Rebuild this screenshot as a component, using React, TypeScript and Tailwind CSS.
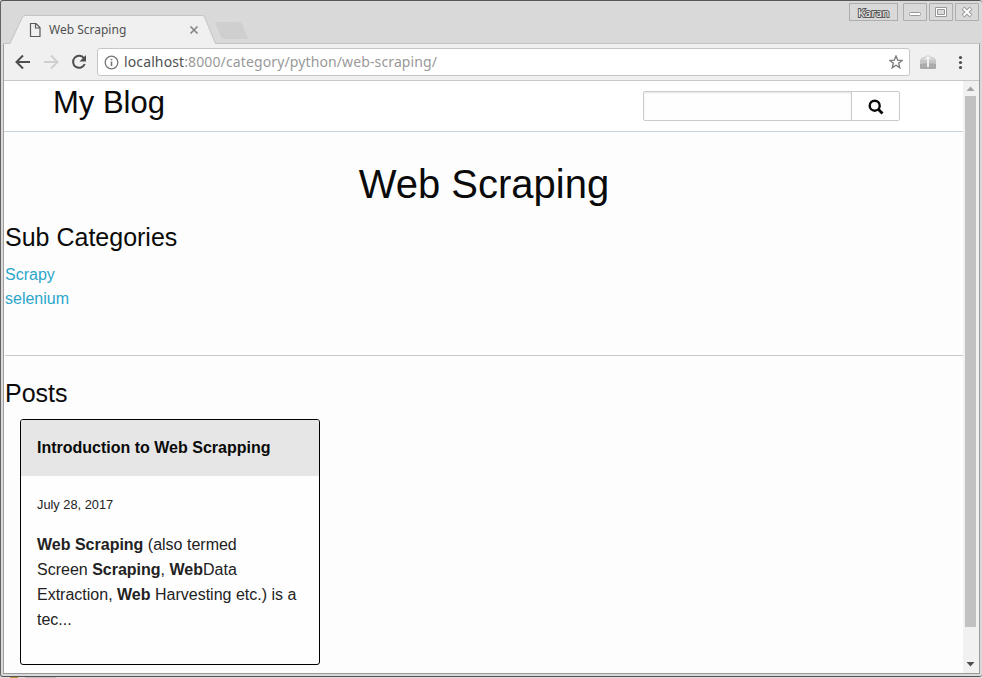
import React from "react";

function TitleBar() {
  return (
    <div className="relative flex h-[43px] shrink-0 items-end bg-[#d9d9d9]">
      <svg className="absolute left-0 top-0" width="978" height="43" viewBox="0 0 978 43">
        <path d="M0 42.5H7L19.500 16Q20 14.500 22 14.500H199Q201 14.500 201.500 16L212.500 42.500H978" fill="#f0f0f0" stroke="#c4c4c4" />
        <path d="M8 42H212V43H8z" fill="#f0f0f0" />
        <path d="M212 21H236Q238 21 239 23L245 38H222Q219 38 218 36z" fill="#cfcfcf" />
        <path d="M27.500 22.500H33L37 26.500V35.500H27.500zM32.500 22.500V27H37" fill="none" stroke="#5a5a5a" strokeWidth="1.200" />
        <path d="M187.500 25.500L194.500 32.500M194.500 25.500L187.500 32.500" stroke="#868686" strokeWidth="1.700" />
      </svg>
      <span className="relative ml-[46px] mb-[5px] font-['Noto_Sans',sans-serif] text-[12px] leading-[18px] text-[#505050]">Web Scraping</span>
      <div className="absolute left-[846px] top-[2px] flex h-[18px]">
        <div className="mr-[5px] flex w-[49px] items-center justify-center border border-[#adadad] pt-px font-['Noto_Sans',sans-serif] text-[11.500px] leading-none text-[#f2f2f2] [paint-order:stroke_fill] [-webkit-text-stroke:2px_#595959]">Karan</div>
        <svg width="78" height="18" viewBox="0 0 78 18">
          <g fill="none" stroke="#adadad"><path d="M.5.500H23.500V17.500H.5zM26.500.500H49.500V17.500H26.500zM52.500.500H75.500V17.500H52.500z" /></g>
          <rect x="6.500" y="9.500" width="11" height="3" rx="1" fill="#fff" stroke="#999" />
          <path d="M32.500 4.500H43.500V13.500H32.500zM34.500 6.500H41.500V11.500H34.500z" fill="#fff" fillRule="evenodd" stroke="#999" />
          <path d="M60 5L68 13M68 5L60 13" stroke="#999" strokeWidth="4" />
          <path d="M60.500 5.500L67.500 12.500M67.500 5.500L60.500 12.500" stroke="#fff" strokeWidth="2" />
        </svg>
      </div>
    </div>
  );
}

function Toolbar() {
  return (
    <div className="flex h-[37px] shrink-0 items-center border-b border-[#c8c8c8] bg-[#f0f0f0] pl-[10px]">
      <svg width="76" height="24" viewBox="0 0 76 24" fill="none" strokeWidth="2">
        <path d="M16 12H3M9 5.500L2.500 12L9 18.500" stroke="#4e4e4e" />
        <path d="M30 12H43M37 5.500L43.500 12L37 18.500" stroke="#cfcfcf" />
        <path d="M70 8.300A6 6 0 1 0 70.700 14" stroke="#4e4e4e" />
        <path d="M72 5V11.500H65.500z" fill="#4e4e4e" />
      </svg>
      <div className="ml-[7px] flex h-[28px] w-[813px] items-center rounded-[3px] border border-[#c6c6c6] bg-white pl-[6px]">
        <svg width="15" height="15" viewBox="0 0 15 15">
          <circle cx="7.500" cy="7.500" r="6.300" fill="none" stroke="#777" strokeWidth="1.300" />
          <path d="M7.500 6.500V11M7.500 3.700V5.200" stroke="#777" strokeWidth="1.600" />
        </svg>
        <div className="ml-[5px] flex-1 font-['Noto_Sans',sans-serif] text-[14px] leading-[20px] tracking-[0.120px] text-[#999]"><span className="text-[#505050]">localhost</span>:8000/category/python/web-scraping/</div>
        <svg className="mr-[6px]" width="14" height="14" viewBox="0 0 14 14">
          <path d="M7 1L8.700 5.100L13.100 5.400L9.700 8.300L10.800 12.800L7 10.300L3.200 12.800L4.300 8.300L.9 5.400L5.300 5.100z" fill="none" stroke="#777" strokeWidth="1.300" />
        </svg>
      </div>
      <svg className="ml-[10px]" width="16" height="14" viewBox="0 0 16 14">
        <path d="M0 5Q1 2 4 2L8 0L12 2Q15 2 16 5V7H0z" fill="#d3d3d3" />
        <path d="M0 8H16V13Q16 14 15 14H1Q0 14 0 13z" fill="#aaa" />
        <path d="M0 5H16V9L8 8L0 9z" fill="#c6c6c6" />
        <path d="M5 3L8 1L11 3L9 4V12H7V5z" fill="#f0f0f0" />
      </svg>
      <svg className="ml-[22px]" width="5" height="15" viewBox="0 0 5 15" fill="#4e4e4e">
        <circle cx="2.500" cy="2.500" r="1.600" /><circle cx="2.500" cy="7.500" r="1.600" /><circle cx="2.500" cy="12.500" r="1.600" />
      </svg>
    </div>
  );
}

function Scrollbar() {
  return (
    <div className="flex w-[16px] shrink-0 flex-col bg-[#f1f1f1]">
      <svg width="15" height="15" viewBox="0 0 15 15"><path d="M3.500 10L7.500 5.500L11.500 10z" fill="#a3a3a3" /></svg>
      <div className="ml-[2px] h-[531px] w-[11px] bg-[#c1c1c1]" />
      <div className="flex-1" />
      <svg className="mb-[1px]" width="15" height="15" viewBox="0 0 15 15"><path d="M3.500 5L7.500 9.500L11.500 5z" fill="#505050" /></svg>
    </div>
  );
}

function PostCard() {
  return (
    <article className="ml-[15px] mt-[8px] h-[246px] w-[300px] overflow-hidden rounded-[3px] border border-black bg-[#fefefe]">
      <h3 className="h-[56px] bg-[#e6e6e6] px-4 pt-[15px] text-[16px] font-bold leading-[25px] text-[#0a0a0a]">Introduction to Web Scrapping</h3>
      <div className="px-4 text-[#222]">
        <div className="pt-[18px] text-[12.800px] leading-[22px]">July 28, 2017</div>
        <p className="mt-[16px] text-[16px] leading-[25px]">
          <b>Web Scraping</b> (also termed<br />Screen <b>Scraping</b>, <b>Web</b>Data<br />Extraction, <b>Web</b> Harvesting etc.) is a<br />tec...
        </p>
      </div>
    </article>
  );
}

function Page() {
  return (
    <div className="flex min-h-0 flex-1">
      <main className="min-w-0 flex-1 overflow-hidden bg-[#fdfdfd] pl-[1px] font-['Liberation_Sans',sans-serif] text-[#0a0a0a]">
        <header className="-ml-px flex h-[51px] items-start border-b border-[#c6d3da] bg-white pl-[49px]">
          <div className="w-[590px] pt-[2px] text-[31px] leading-[40px]">My Blog</div>
          <div className="mt-[10px] flex h-[30px] w-[257px] rounded-[2px] border border-[#cacaca]">
            <input className="w-[207px] bg-[#fefefe] shadow-[inset_0_1px_2px_rgba(10,10,10,0.1)] outline-none" />
            <button className="flex flex-1 items-center justify-center border-l border-[#cacaca] pt-px">
              <svg width="16" height="16" viewBox="0 0 16 16" fill="none" stroke="#0a0a0a" strokeWidth="2.400">
                <circle cx="6.700" cy="6.700" r="5" /><path d="M10.500 10.500L14.500 14.500" strokeWidth="2.900" />
              </svg>
            </button>
          </div>
        </header>
        <h1 className="mt-[24px] text-center text-[40px] leading-[56px]">Web Scraping</h1>
        <h2 className="mt-[8px] text-[25px] leading-[35px]">Sub Categories</h2>
        <div className="mt-[8px] flex flex-col text-[16px] leading-[24px] text-[#2ba6cb]"><a>Scrapy</a><a>selenium</a></div>
        <hr className="mt-[44px] border-t border-[#cacaca]" />
        <h2 className="mt-[20px] text-[25px] leading-[35px]">Posts</h2>
        <PostCard />
      </main>
      <Scrollbar />
    </div>
  );
}

export default function App() {
  return (
    <div className="flex h-[678px] w-[982px] flex-col overflow-hidden bg-[#dedede]">
      <div className="flex h-[677px] flex-col rounded-[3px] border-b border-l border-t border-b-[#555] border-l-[#656263] border-t-[#585556] bg-[#d9d9d9] pl-[2px]">
        <div className="-mb-px h-[43px] w-[978px]"><TitleBar /></div>
        <div className="flex h-[631px] w-[977px] flex-col border-x border-b border-b-[#999] border-l-[#a29e9f] border-r-[#999] pt-px">
          <Toolbar />
          <Page />
        </div>
      </div>
      <div className="ml-[10px] flex h-px"><div className="h-px w-[8px] bg-[#bc923f]" /><div className="ml-[7px] h-px w-[31px] bg-[#bbb]" /></div>
    </div>
  );
}
